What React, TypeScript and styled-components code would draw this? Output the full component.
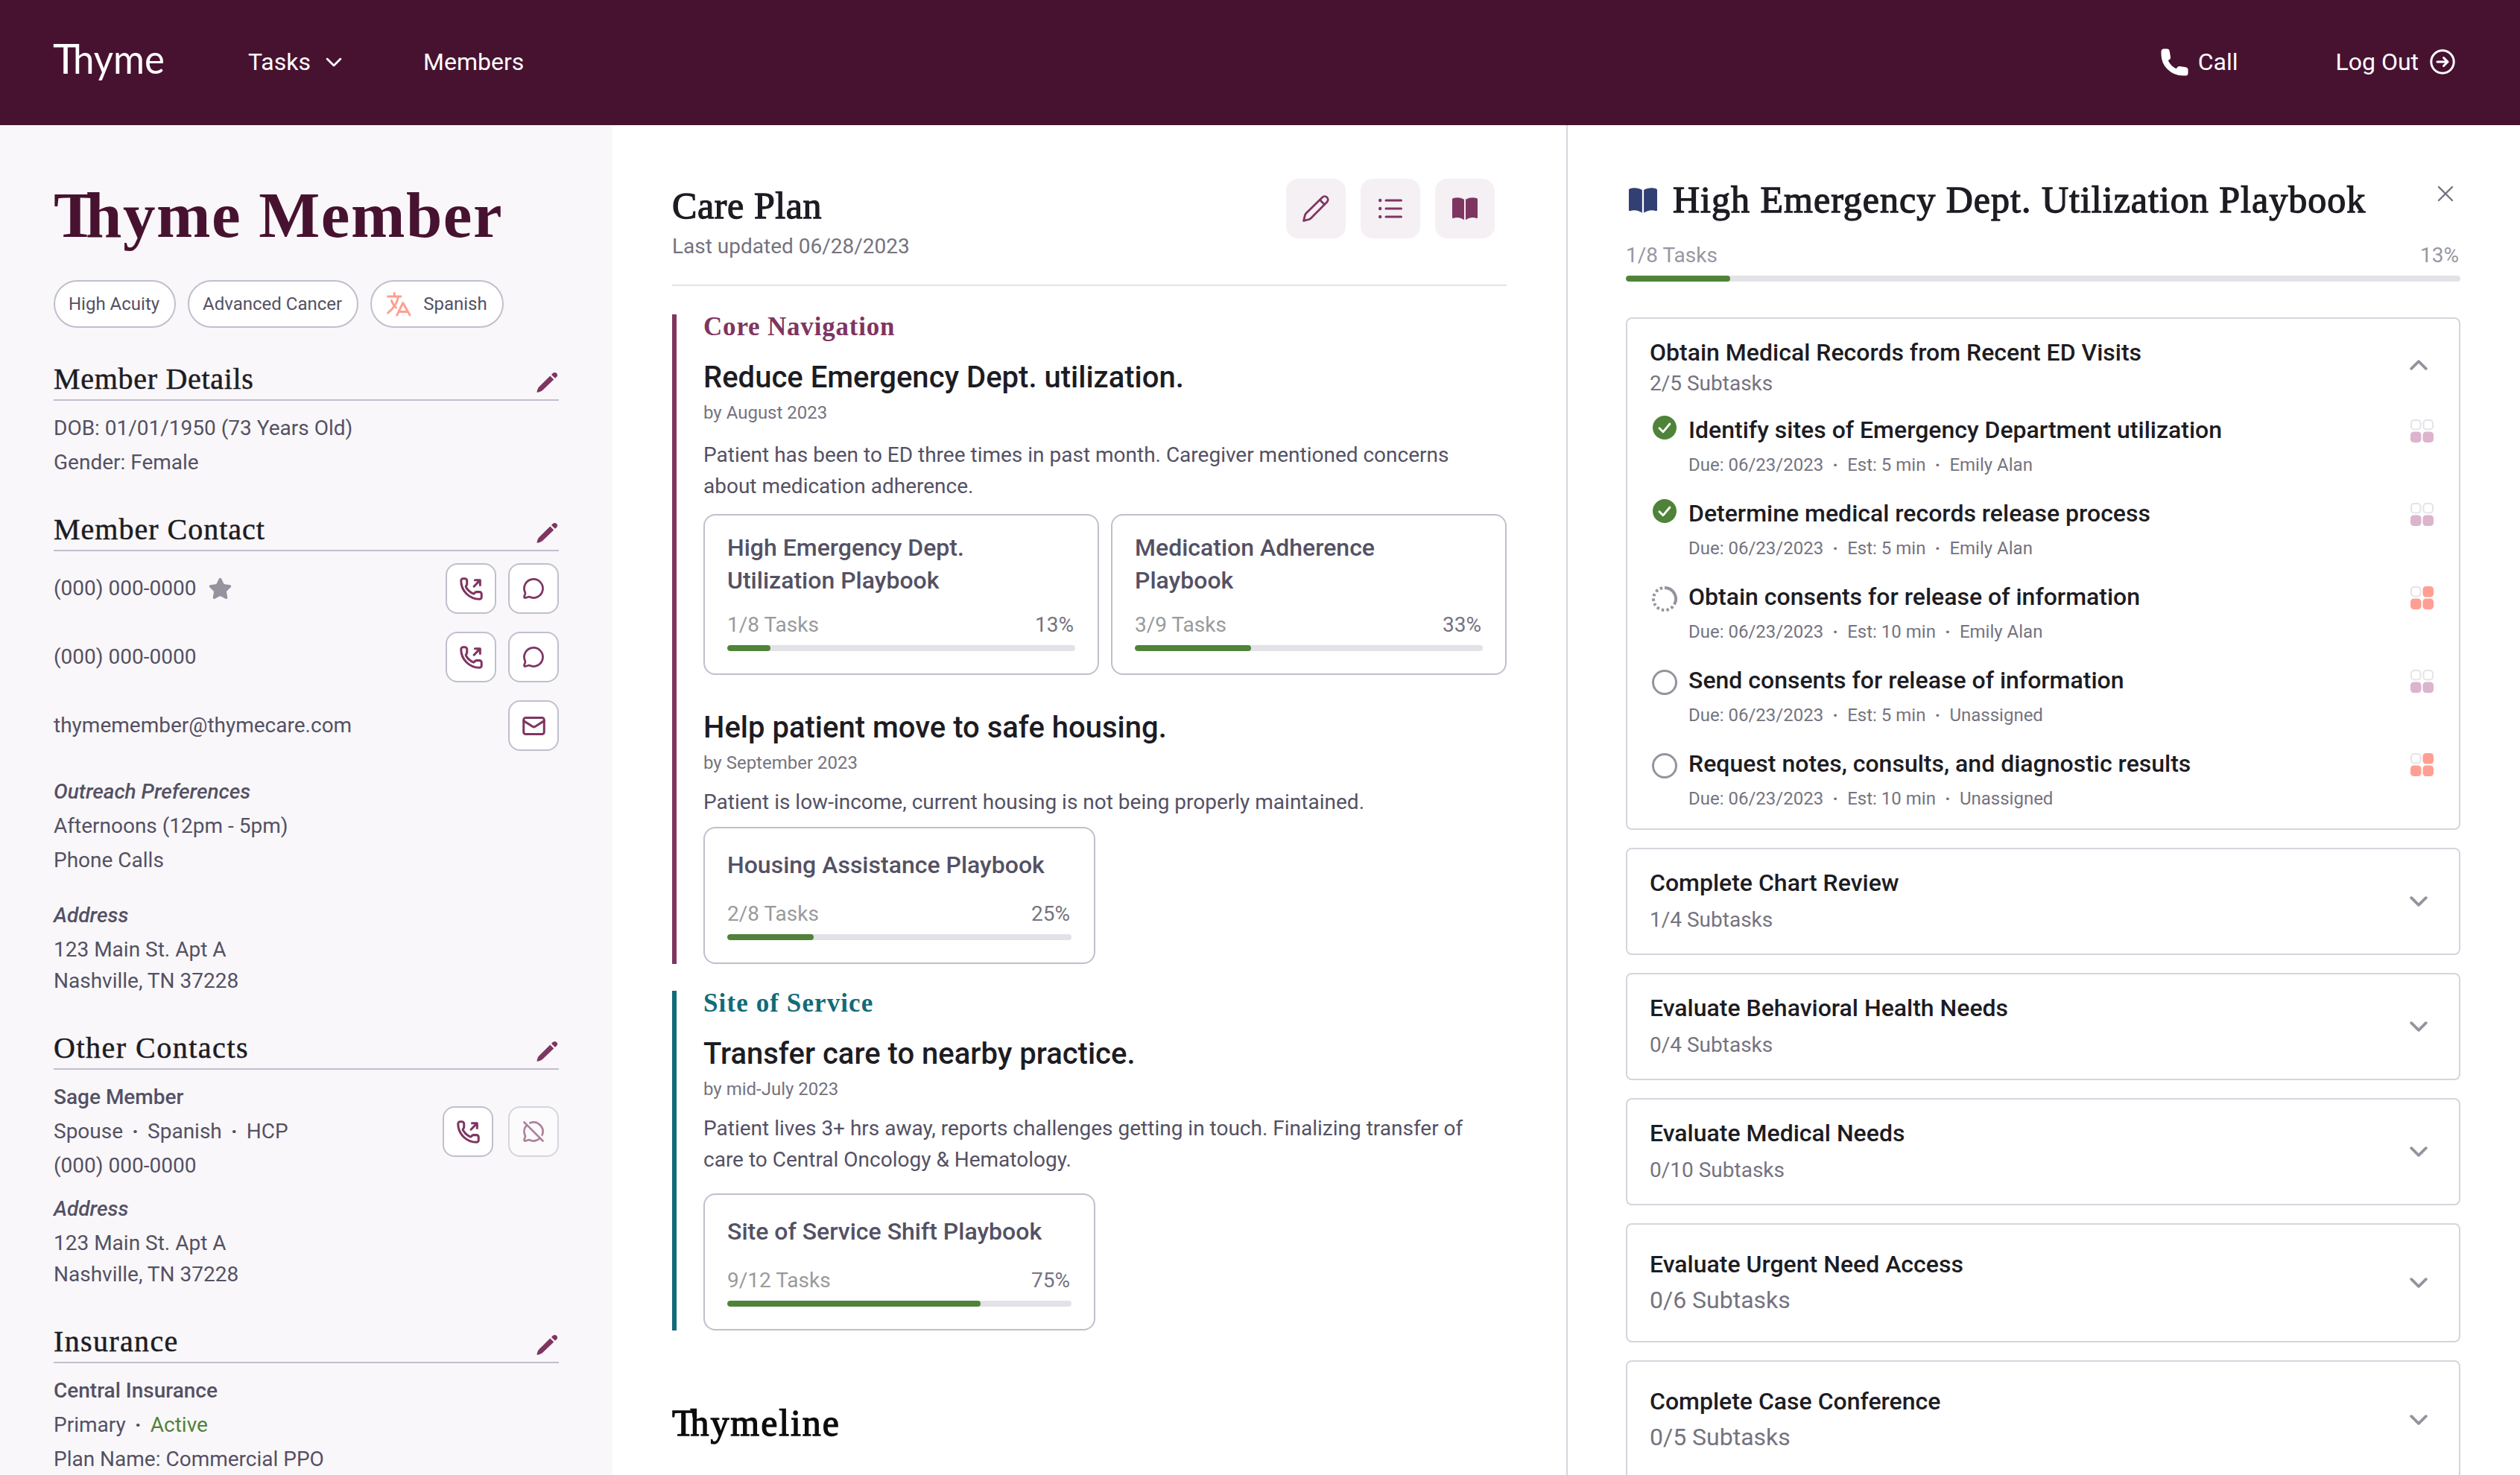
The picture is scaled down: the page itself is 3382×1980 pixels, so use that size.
import React from 'react';
import styled, { createGlobalStyle, css } from 'styled-components';
import { Mail, MessageCircle, MessageCircleOff, Star } from 'lucide-react';

const colors = {
  plum: '#471230',
  berry: '#7f3561',
  teal: '#126b78',
  navy: '#313f73',
  green: '#4f8339',
  coral: '#ff9f92',
  pink: '#dcb4cd',
  ink: '#1d1c23',
  text: '#545164',
  muted: '#757380',
  faint: '#9997a1',
  line: '#c0bfcd',
  lightLine: '#d5d5dd',
  track: '#e2e2e7',
  blush: '#f5f0f4',
  sidebar: '#f9f7f9',
};

const GlobalStyle = createGlobalStyle`
  * {
    box-sizing: border-box;
  }

  body {
    margin: 0;
    background: #fff;
    color: ${colors.text};
    font-family: Roboto, 'Liberation Sans', sans-serif;
    font-size: 28px;
    overflow: hidden;
  }

  h1, h2, h3, h4, p {
    margin: 0;
    font-weight: 400;
  }

  svg {
    display: block;
    flex: none;
  }
`;

const serif = css`
  font-family: 'Liberation Serif', serif;
`;

/* ---------- icons ---------- */

type IconProps = { size?: number };

const Logo: React.FC = () => (
  <svg width="184" height="92" viewBox="-4 -20 184 92" fill="#fff" fontFamily="Lato, sans-serif">
    <text x="-1" y="42" fontSize="57" textLength="34" lengthAdjust="spacingAndGlyphs">
      T
    </text>
    <text x="26" y="42" fontSize="55" textLength="123" lengthAdjust="spacingAndGlyphs">
      hyme
    </text>
  </svg>
);

const ChevronIcon: React.FC<{ width: number; stroke: number; up?: boolean }> = ({ width, stroke, up }) => (
  <svg
    width={width}
    height={width / 2 + 2}
    viewBox="0 0 24 14"
    fill="none"
    stroke="currentColor"
    strokeWidth={stroke}
    strokeLinecap="round"
    strokeLinejoin="round"
  >
    <path d={up ? 'M2.2 11.8 12 2.2l9.8 9.6' : 'M2.2 2.2 12 11.8l9.8-9.6'} />
  </svg>
);

const PhoneSolidIcon: React.FC = () => (
  <svg width="37" height="37" viewBox="1.8 1.8 16.4 16.4" fill="currentColor" stroke="currentColor" strokeWidth="1.2" strokeLinejoin="round">
    <path d="M2.6 3.6a1 1 0 0 1 1-1h1.8a1 1 0 0 1 .98.83l.6 3.6a1 1 0 0 1-.53 1.05l-1.1.6a10.6 10.6 0 0 0 5.97 5.97l.6-1.1a1 1 0 0 1 1.05-.53l3.6.6a1 1 0 0 1 .83.98v1.8a1 1 0 0 1-1 1h-1.6C8.1 17.4 2.6 11.9 2.6 5.2V3.6z" />
  </svg>
);

const LogOutIcon: React.FC = () => (
  <svg width="34" height="34" viewBox="0 0 34 34" fill="none" stroke="currentColor" strokeWidth="3" strokeLinecap="round" strokeLinejoin="round">
    <circle cx="17" cy="17" r="15.2" />
    <path d="M10 17h14M18.5 11.5 24 17l-5.5 5.5" />
  </svg>
);

const TranslateIcon: React.FC = () => (
  <svg width="33" height="33" viewBox="0 0 33 33" fill="none" stroke={colors.coral} strokeWidth="2.9" strokeLinecap="round" strokeLinejoin="round">
    <path d="M1.5 6H19M10.2 1.5V6M15.7 6C14 15 8.5 22.5 1.7 28M6.5 11.5c1.2 4 3.2 7 6 9.5" />
    <path d="M13.8 31l8-16.5L31 31M17 26.5h11.5" />
  </svg>
);

const PencilIcon: React.FC = () => (
  <svg width="29" height="28" viewBox="0 0 29 28" fill={colors.berry}>
    <path d="M18.3 5.6l4.9 4.9L8.6 24.4c-2 1.9-5 3-8.1 3.4.3-3.2 1.3-6 3.2-7.9z" />
    <path d="M20 3.9l1.9-2a4.1 4.1 0 0 1 5.1 0 4 4 0 0 1 0 5.2l-2.1 1.7z" />
  </svg>
);

const PencilOutlineIcon: React.FC = () => (
  <svg width="36" height="36" viewBox="0 0 36 36" fill="none" stroke="currentColor" strokeWidth="2.8" strokeLinecap="round" strokeLinejoin="round">
    <path d="M1.6 34.4l1.8-7.5c.3-1 .7-1.8 1.5-2.6L26.6 2.9a4.4 4.4 0 0 1 6.3 6.3L11.3 30.9c-.8.8-1.6 1.3-2.6 1.6z" />
    <path d="M23.5 6.5l6 6" />
  </svg>
);

const ListIcon: React.FC = () => (
  <svg width="34" height="28" viewBox="0 0 34 28" fill="none" stroke="currentColor" strokeWidth="3" strokeLinecap="round">
    <path d="M11 3h20.5M11 14h20.5M11 25h20.5" />
    <path d="M3.2 3h.01M3.2 14h.01M3.2 25h.01" strokeWidth="4.4" />
  </svg>
);

const BookIcon: React.FC<IconProps> = ({ size = 34 }) => (
  <svg width={size} height={size * 0.9} viewBox="0 0 34 30" fill="currentColor">
    <path d="M0 2.6C0 1.7.5 1.1 1.4.8 6-.6 11.5-.2 16 2.5V30C11.5 26.7 6.5 26 1.3 27.6.5 27.8 0 27.4 0 26.6z" />
    <path d="M34 2.6c0-.9-.5-1.5-1.4-1.8C28-.6 22.5-.2 18 2.5V30c4.5-3.3 9.5-4 14.7-2.4.8.2 1.3-.2 1.3-1z" />
  </svg>
);

const PhoneOutIcon: React.FC = () => (
  <svg width="33" height="33" viewBox="0 0 24 24" fill="none" stroke={colors.berry} strokeWidth="2.2" strokeLinecap="round" strokeLinejoin="round">
    <path d="M13.832 16.568a1 1 0 0 0 1.213-.303l.355-.465A2 2 0 0 1 17 15h3a2 2 0 0 1 2 2v3a2 2 0 0 1-2 2A18 18 0 0 1 2 4a2 2 0 0 1 2-2h1.8a2 2 0 0 1 2 2v3a2 2 0 0 1-.6 1.6l-.2.4a1 1 0 0 0-.2 1.2 14 14 0 0 0 7.032 6.368" />
    <path d="M14.6 9.6 20.3 3.7M15.6 3.4h5v5" />
  </svg>
);

const CloseIcon: React.FC = () => (
  <svg width="22" height="22" viewBox="0 0 22 22" stroke={colors.muted} strokeWidth="2.4" strokeLinecap="round">
    <path d="M2 2l18 18M20 2 2 20" />
  </svg>
);

type Status = 'done' | 'started' | 'open';

const StatusIcon: React.FC<{ status: Status }> = ({ status }) => (
  <svg width="40" height="40" viewBox="0 0 40 40" fill="none" strokeLinecap="round" strokeLinejoin="round">
    {status === 'done' && (
      <>
        <circle cx="20" cy="20" r="16" fill={colors.green} />
        <path d="M13 20.8l4.9 5L27 15" stroke="#fff" strokeWidth="2.8" />
      </>
    )}
    {status === 'started' && (
      <g stroke="#95939e" strokeWidth="4" strokeLinecap="butt">
        <path d="M20 5a15 15 0 0 1 13 22.5" />
        <path d="M33 27.5A15 15 0 1 1 20 5" strokeDasharray="3.4 3.2" strokeDashoffset="-3.2" />
      </g>
    )}
    {status === 'open' && <circle cx="20" cy="20" r="15.5" stroke="#95939e" strokeWidth="3" />}
  </svg>
);

const PriorityIcon: React.FC<{ high?: boolean }> = ({ high }) => {
  const fill = high ? colors.coral : colors.pink;
  return (
    <svg width="31" height="31" viewBox="0 0 31 31">
      <rect x="1" y="1" width="12.5" height="12.5" rx="4" fill="#fff" stroke="#e4e3e9" strokeWidth="2" />
      {high ? (
        <rect x="16.5" width="14.5" height="14.5" rx="4.5" fill={fill} />
      ) : (
        <rect x="17.5" y="1" width="12.5" height="12.5" rx="4" fill="#fff" stroke="#e4e3e9" strokeWidth="2" />
      )}
      <rect y="16.5" width="14.5" height="14.5" rx="4.5" fill={fill} />
      <rect x="16.5" y="16.5" width="14.5" height="14.5" rx="4.5" fill={fill} />
    </svg>
  );
};

/* ---------- page frame ---------- */

const Page = styled.div`
  display: flex;
  flex-direction: column;
  width: 3382px;
  height: 1980px;
  overflow: hidden;
`;

const TopBar = styled.header`
  display: flex;
  align-items: center;
  flex: none;
  height: 168px;
  padding: 0 87px 2px 68px;
  background: ${colors.plum};
  color: #fff;
  font-size: 32px;
  line-height: 40px;
`;

const Brand = styled.a`
  margin-right: 81px;
`;

const NavItem = styled.a<{ $gap?: number; $after?: number }>`
  display: flex;
  align-items: center;
  gap: ${({ $gap = 0 }) => $gap}px;
  margin-right: ${({ $after = 0 }) => $after}px;
`;

const Spacer = styled.div`
  flex: 1;
`;

const Columns = styled.div`
  display: flex;
  flex: 1;
  min-height: 0;
`;

/* ---------- member sidebar ---------- */

const Sidebar = styled.aside`
  flex: none;
  width: 822px;
  padding: 73px 72px 0;
  background: ${colors.sidebar};
  line-height: 46px;
  overflow: hidden;
`;

const MemberName = styled.h1`
  ${serif}
  color: ${colors.plum};
  font-size: 87px;
  font-weight: 700;
  line-height: 96px;
  letter-spacing: 1.5px;
  white-space: nowrap;
`;

/* pulls the following letter under the bar of a capital T */
const TightCap = styled.span<{ $by: number }>`
  letter-spacing: -${({ $by }) => $by}px;
`;

const Chips = styled.div`
  display: flex;
  gap: 16px;
  margin-top: 39px;
`;

const Chip = styled.span`
  display: flex;
  align-items: center;
  gap: 16px;
  height: 64px;
  padding: 0 20px 0 18px;
  border: 2px solid ${colors.line};
  border-radius: 32px;
  background: #fff;
  font-size: 24px;

  svg {
    margin-left: 2px;
  }
`;

const SectionHead = styled.div<{ $top: number }>`
  display: flex;
  align-items: center;
  justify-content: space-between;
  height: 53px;
  margin-top: ${({ $top }) => $top}px;
  padding: 0 1px 3px 0;
  border-bottom: 2px solid ${colors.line};

  svg {
    margin-top: 7px;
  }
`;

const SectionTitle = styled.h2<{ $spacing: number }>`
  ${serif}
  color: ${colors.ink};
  font-size: 40px;
  line-height: 48px;
  letter-spacing: ${({ $spacing }) => $spacing}px;
  -webkit-text-stroke: 0.5px ${colors.ink};
`;

const Lines = styled.div<{ $top: number }>`
  margin-top: ${({ $top }) => $top}px;
`;

const Address = styled.p`
  margin-top: 2px;
  line-height: 42px;
`;

const Label = styled.p`
  font-style: italic;
  font-weight: 500;
`;

const Strong = styled.p`
  font-weight: 500;
`;

const Dot = styled.span`
  display: inline-block;
  width: 33px;
  text-align: center;
  font-weight: 700;

  &::before {
    content: '·';
  }
`;

const MetaDot = styled(Dot)`
  width: 32px;
`;

const Active = styled.span`
  color: ${colors.green};
`;

const ContactList = styled.div`
  display: flex;
  flex-direction: column;
  gap: 24px;
  margin-top: 16px;
`;

const ContactRow = styled.div`
  display: flex;
  align-items: center;
  justify-content: space-between;
`;

const ContactValue = styled.span`
  display: flex;
  align-items: center;
  gap: 16px;
`;

const Actions = styled.div<{ $gap?: number }>`
  display: flex;
  gap: ${({ $gap = 16 }) => $gap}px;
`;

const ActionButton = styled.button`
  display: flex;
  align-items: center;
  justify-content: center;
  width: 68px;
  height: 68px;
  padding: 0;
  border: 2px solid ${colors.line};
  border-radius: 16px;
  background: #fff;
  color: ${colors.berry};

  &:disabled {
    opacity: 0.6;
  }
`;

const EditableHead: React.FC<{ title: string; top: number; spacing: number }> = ({ title, top, spacing }) => (
  <SectionHead $top={top}>
    <SectionTitle $spacing={spacing}>{title}</SectionTitle>
    <PencilIcon />
  </SectionHead>
);

const MemberSidebar: React.FC = () => (
  <Sidebar>
    <MemberName>
      <TightCap $by={15}>T</TightCap>hyme Member
    </MemberName>
    <Chips>
      <Chip>High Acuity</Chip>
      <Chip>Advanced Cancer</Chip>
      <Chip>
        <TranslateIcon />
        Spanish
      </Chip>
    </Chips>

    <EditableHead title="Member Details" top={45} spacing={0.7} />
    <Lines $top={14}>
      <p>DOB: 01/01/1950 (73 Years Old)</p>
      <p>Gender: Female</p>
    </Lines>

    <EditableHead title="Member Contact" top={43} spacing={1} />
    <ContactList>
      {[true, false].map((preferred) => (
        <ContactRow key={String(preferred)}>
          <ContactValue>
            (000) 000-0000
            {preferred && <Star size={33} color="#95939e" fill="#95939e" strokeWidth={1.5} />}
          </ContactValue>
          <Actions>
            <ActionButton>
              <PhoneOutIcon />
            </ActionButton>
            <ActionButton>
              <MessageCircle size={30} strokeWidth={2.2} />
            </ActionButton>
          </Actions>
        </ContactRow>
      ))}
      <ContactRow>
        <ContactValue>thymemember@thymecare.com</ContactValue>
        <ActionButton>
          <Mail size={33} strokeWidth={2.2} />
        </ActionButton>
      </ContactRow>
    </ContactList>
    <Lines $top={32}>
      <Label>Outreach Preferences</Label>
      <p>Afternoons (12pm - 5pm)</p>
      <p>Phone Calls</p>
    </Lines>
    <Lines $top={28}>
      <Label>Address</Label>
      <Address>
        123 Main St. Apt A<br />
        Nashville, TN 37228
      </Address>
    </Lines>

    <EditableHead title="Other Contacts" top={45} spacing={1.5} />
    <Lines $top={14}>
      <ContactRow>
        <div>
          <Strong>Sage Member</Strong>
          <p>
            Spouse
            <Dot />
            Spanish
            <Dot />
            HCP
          </p>
          <p>(000) 000-0000</p>
        </div>
        <Actions $gap={20}>
          <ActionButton>
            <PhoneOutIcon />
          </ActionButton>
          <ActionButton disabled>
            <MessageCircleOff size={30} strokeWidth={2.2} />
          </ActionButton>
        </Actions>
      </ContactRow>
    </Lines>
    <Lines $top={12}>
      <Label>Address</Label>
      <Address>
        123 Main St. Apt A<br />
        Nashville, TN 37228
      </Address>
    </Lines>

    <EditableHead title="Insurance" top={45} spacing={1.35} />
    <Lines $top={14}>
      <Strong>Central Insurance</Strong>
      <p>
        Primary
        <Dot />
        <Active>Active</Active>
      </p>
      <p>Plan Name: Commercial PPO</p>
    </Lines>
  </Sidebar>
);

/* ---------- shared progress ---------- */

const ProgressLabels = styled.div<{ $even?: boolean }>`
  display: flex;
  justify-content: space-between;
  padding: 1px 2px 0 0;
  line-height: 40px;
  color: ${({ $even }) => ($even ? colors.faint : colors.muted)};

  span:first-child {
    color: ${({ $even }) => ($even ? colors.faint : '#9a9a9a')};
  }
`;

const Track = styled.div`
  height: 8px;
  margin-top: 7px;
  border-radius: 4px;
  background: ${colors.track};
  overflow: hidden;
`;

const Fill = styled.div`
  height: 100%;
  border-radius: 4px;
  background: ${colors.green};
`;

type ProgressProps = { tasks: string; percent: string; value: number; even?: boolean };

const Progress: React.FC<ProgressProps> = ({ tasks, percent, value, even }) => (
  <div>
    <ProgressLabels $even={even}>
      <span>{tasks}</span>
      <span>{percent}</span>
    </ProgressLabels>
    <Track>
      <Fill style={{ width: `${value}%` }} />
    </Track>
  </div>
);

/* ---------- care plan ---------- */

const Main = styled.main`
  flex: none;
  width: 1282px;
  padding: 72px 80px 0;
  border-right: 2px solid ${colors.lightLine};
`;

const PlanHeader = styled.div`
  display: flex;
  align-items: flex-start;
  justify-content: space-between;
  height: 144px;
  padding-right: 16px;
  border-bottom: 2px solid ${colors.track};
`;

const PlanHeading = styled.div`
  padding-top: 8px;
`;

const Title = styled.h2<{ $spacing?: number; $dark?: boolean }>`
  ${serif}
  color: ${({ $dark }) => ($dark ? '#0c0c0e' : colors.ink)};
  font-size: 50px;
  line-height: 56px;
  letter-spacing: ${({ $spacing = 0.6 }) => $spacing}px;
  white-space: nowrap;
  -webkit-text-stroke: 1.3px currentColor;
`;

const Updated = styled.p`
  margin-top: 7px;
  color: ${colors.muted};
  line-height: 40px;
`;

const ToolButton = styled.button`
  display: flex;
  align-items: center;
  justify-content: center;
  width: 80px;
  height: 80px;
  padding: 0;
  border: 0;
  border-radius: 16px;
  background: ${colors.blush};
  color: ${colors.berry};
`;

const Program = styled.section<{ $color: string; $top: number }>`
  margin-top: ${({ $top }) => $top}px;
  padding-left: 36px;
  border-left: 6px solid ${({ $color }) => $color};
`;

const ProgramName = styled.h3<{ $color: string; $spacing: number }>`
  ${serif}
  padding-top: 1px;
  color: ${({ $color }) => $color};
  font-size: 35px;
  font-weight: 700;
  line-height: 32px;
  letter-spacing: ${({ $spacing }) => $spacing}px;
`;

const Goal = styled.div<{ $top: number }>`
  margin-top: ${({ $top }) => $top}px;
`;

const GoalTitle = styled.h4`
  color: ${colors.ink};
  font-size: 40px;
  font-weight: 500;
  line-height: 48px;
`;

const GoalDate = styled.p`
  margin-top: 7px;
  color: ${colors.muted};
  font-size: 24px;
  line-height: 32px;
`;

const GoalText = styled.p<{ $top: number }>`
  margin-top: ${({ $top }) => $top}px;
  line-height: 42px;
`;

const Playbooks = styled.div<{ $top: number }>`
  display: flex;
  gap: 16px;
  margin-top: ${({ $top }) => $top}px;
`;

const PlaybookCard = styled.article<{ $single: boolean }>`
  display: flex;
  flex-direction: column;
  gap: ${({ $single }) => ($single ? 23 : 17)}px;
  width: ${({ $single }) => ($single ? 526 : 531)}px;
  padding: ${({ $single }) => ($single ? 27 : 21)}px 30px 30px;
  border: 2px solid ${colors.line};
  border-radius: 16px;
`;

const PlaybookName = styled.h4`
  font-size: 32px;
  font-weight: 500;
  line-height: 44px;
  white-space: pre-line;
`;

type Playbook = ProgressProps & { name: string };

type GoalData = {
  title: string;
  date: string;
  text: string;
  playbooks: Playbook[];
  top: number;
  textTop: number;
  cardTop: number;
};

const coreGoals: GoalData[] = [
  {
    title: 'Reduce Emergency Dept. utilization.',
    date: 'by August 2023',
    text: 'Patient has been to ED three times in past month. Caregiver mentioned concerns about medication adherence.',
    playbooks: [
      { name: 'High Emergency Dept.\nUtilization Playbook', tasks: '1/8 Tasks', percent: '13%', value: 12.5 },
      { name: 'Medication Adherence\nPlaybook', tasks: '3/9 Tasks', percent: '33%', value: 33.3 },
    ],
    top: 28,
    textTop: 20,
    cardTop: 16,
  },
  {
    title: 'Help patient move to safe housing.',
    date: 'by September 2023',
    text: 'Patient is low-income, current housing is not being properly maintained.',
    playbooks: [{ name: 'Housing Assistance Playbook', tasks: '2/8 Tasks', percent: '25%', value: 25 }],
    top: 47,
    textTop: 16,
    cardTop: 12,
  },
];

const siteGoals: GoalData[] = [
  {
    title: 'Transfer care to nearby practice.',
    date: 'by mid-July 2023',
    text: 'Patient lives 3+ hrs away, reports challenges getting in touch. Finalizing transfer of care to Central Oncology & Hematology.',
    playbooks: [{ name: 'Site of Service Shift Playbook', tasks: '9/12 Tasks', percent: '75%', value: 73.6 }],
    top: 28,
    textTop: 16,
    cardTop: 24,
  },
];

const GoalItem: React.FC<{ goal: GoalData }> = ({ goal }) => (
  <Goal $top={goal.top}>
    <GoalTitle>{goal.title}</GoalTitle>
    <GoalDate>{goal.date}</GoalDate>
    <GoalText $top={goal.textTop}>{goal.text}</GoalText>
    <Playbooks $top={goal.cardTop}>
      {goal.playbooks.map(({ name, ...progress }) => (
        <PlaybookCard key={name} $single={goal.playbooks.length === 1}>
          <PlaybookName>{name}</PlaybookName>
          <Progress {...progress} />
        </PlaybookCard>
      ))}
    </Playbooks>
  </Goal>
);

const ThymelineTitle = styled.div`
  margin-top: 96px;
`;

const CarePlan: React.FC = () => (
  <Main>
    <PlanHeader>
      <PlanHeading>
        <Title>Care Plan</Title>
        <Updated>Last updated 06/28/2023</Updated>
      </PlanHeading>
      <Actions $gap={20}>
        <ToolButton>
          <PencilOutlineIcon />
        </ToolButton>
        <ToolButton>
          <ListIcon />
        </ToolButton>
        <ToolButton>
          <BookIcon />
        </ToolButton>
      </Actions>
    </PlanHeader>
    <Program $color={colors.berry} $top={38}>
      <ProgramName $color={colors.berry} $spacing={0.8}>
        Core Navigation
      </ProgramName>
      {coreGoals.map((goal) => (
        <GoalItem key={goal.title} goal={goal} />
      ))}
    </Program>
    <Program $color={colors.teal} $top={36}>
      <ProgramName $color={colors.teal} $spacing={1.1}>
        Site of Service
      </ProgramName>
      {siteGoals.map((goal) => (
        <GoalItem key={goal.title} goal={goal} />
      ))}
    </Program>
    <ThymelineTitle>
      <Title $dark $spacing={1.9}>
        <TightCap $by={6}>T</TightCap>hymeline
      </Title>
    </ThymelineTitle>
  </Main>
);

/* ---------- playbook panel ---------- */

const Panel = styled.section`
  flex: 1;
  padding: 72px 80px 0 78px;
`;

const PanelHeader = styled.div`
  display: flex;
  align-items: flex-start;
  margin-bottom: 26px;
  padding: 0 9px 0 4px;
  color: ${colors.navy};

  > svg:first-child {
    margin: 12px 21px 0 0;
  }

  > svg:last-child {
    margin: 9px 0 0 auto;
  }
`;

const TaskList = styled.div`
  display: flex;
  flex-direction: column;
  gap: 24px;
  margin-top: 48px;
`;

const TaskCard = styled.article`
  border: 2px solid ${colors.lightLine};
  border-radius: 8px;
`;

const TaskHead = styled.div<{ $height: number }>`
  display: flex;
  align-items: center;
  justify-content: space-between;
  height: ${({ $height }) => $height}px;
  padding: 0 42px 0 30px;
  color: #95939e;
`;

const OpenHead = styled(TaskHead)`
  margin-top: 23px;

  > svg {
    margin-bottom: 3px;
  }
`;

const TaskTitle = styled.h3`
  color: ${colors.ink};
  font-size: 32px;
  font-weight: 500;
  line-height: 44px;
`;

const TaskCount = styled.p<{ $large?: boolean }>`
  margin-top: ${({ $large }) => ($large ? 6 : 8)}px;
  margin-bottom: ${({ $large }) => ($large ? 4 : 2)}px;
  color: ${colors.muted};
  font-size: ${({ $large }) => ($large ? 32 : 28)}px;
  line-height: 40px;
`;

const OpenTaskCount = styled(TaskCount)`
  margin: 2px 0 0;
  line-height: 35px;
`;

const Subtasks = styled.div`
  display: flex;
  flex-direction: column;
  gap: 27px;
  padding: 23px 34px 24px 30px;
`;

const Subtask = styled.div`
  display: flex;
  align-items: flex-start;
  height: 85px;
`;

const StatusCell = styled.div<{ $done: boolean }>`
  width: 52px;
  padding-top: ${({ $done }) => ($done ? 0 : 5)}px;
  margin-top: ${({ $done }) => ($done ? -1 : 0)}px;
`;

const SubtaskBody = styled.div`
  flex: 1;
`;

const SubtaskMeta = styled.p`
  margin-top: 9px;
  color: ${colors.muted};
  font-size: 24px;
  line-height: 32px;
`;

const PriorityCell = styled.div`
  padding-top: 8px;
`;

const subtasks: { title: string; estimate: string; owner: string; status: Status; high?: boolean }[] = [
  { title: 'Identify sites of Emergency Department utilization', estimate: '5 min', owner: 'Emily Alan', status: 'done' },
  { title: 'Determine medical records release process', estimate: '5 min', owner: 'Emily Alan', status: 'done' },
  { title: 'Obtain consents for release of information', estimate: '10 min', owner: 'Emily Alan', status: 'started', high: true },
  { title: 'Send consents for release of information', estimate: '5 min', owner: 'Unassigned', status: 'open' },
  { title: 'Request notes, consults, and diagnostic results', estimate: '10 min', owner: 'Unassigned', status: 'open', high: true },
];

const closedTasks: { title: string; count: string; large?: boolean }[] = [
  { title: 'Complete Chart Review', count: '1/4 Subtasks' },
  { title: 'Evaluate Behavioral Health Needs', count: '0/4 Subtasks' },
  { title: 'Evaluate Medical Needs', count: '0/10 Subtasks' },
  { title: 'Evaluate Urgent Need Access', count: '0/6 Subtasks', large: true },
  { title: 'Complete Case Conference', count: '0/5 Subtasks', large: true },
];

const PlaybookPanel: React.FC = () => (
  <Panel>
    <PanelHeader>
      <BookIcon size={38} />
      <Title $spacing={1}>High Emergency Dept. Utilization Playbook</Title>
      <CloseIcon />
    </PanelHeader>
    <Progress tasks="1/8 Tasks" percent="13%" value={12.5} even />
    <TaskList>
      <TaskCard>
        <OpenHead $height={81}>
          <div>
            <TaskTitle>Obtain Medical Records from Recent ED Visits</TaskTitle>
            <OpenTaskCount>2/5 Subtasks</OpenTaskCount>
          </div>
          <ChevronIcon width={24} stroke={3.8} up />
        </OpenHead>
        <Subtasks>
          {subtasks.map((task) => (
            <Subtask key={task.title}>
              <StatusCell $done={task.status === 'done'}>
                <StatusIcon status={task.status} />
              </StatusCell>
              <SubtaskBody>
                <TaskTitle>{task.title}</TaskTitle>
                <SubtaskMeta>
                  Due: 06/23/2023
                  <MetaDot />
                  Est: {task.estimate}
                  <MetaDot />
                  {task.owner}
                </SubtaskMeta>
              </SubtaskBody>
              <PriorityCell>
                <PriorityIcon high={task.high} />
              </PriorityCell>
            </Subtask>
          ))}
        </Subtasks>
      </TaskCard>
      {closedTasks.map((task) => (
        <TaskCard key={task.title}>
          <TaskHead $height={task.large ? 156 : 140}>
            <div>
              <TaskTitle>{task.title}</TaskTitle>
              <TaskCount $large={task.large}>{task.count}</TaskCount>
            </div>
            <ChevronIcon width={24} stroke={3.8} />
          </TaskHead>
        </TaskCard>
      ))}
    </TaskList>
  </Panel>
);

const App: React.FC = () => (
  <>
    <GlobalStyle />
    <Page>
      <TopBar>
        <Brand>
          <Logo />
        </Brand>
        <NavItem $gap={20} $after={109}>
          Tasks
          <ChevronIcon width={22} stroke={3} />
        </NavItem>
        <NavItem>Members</NavItem>
        <Spacer />
        <NavItem $gap={13} $after={131}>
          <PhoneSolidIcon />
          Call
        </NavItem>
        <NavItem $gap={15}>
          Log Out
          <LogOutIcon />
        </NavItem>
      </TopBar>
      <Columns>
        <MemberSidebar />
        <CarePlan />
        <PlaybookPanel />
      </Columns>
    </Page>
  </>
);

export default App;
